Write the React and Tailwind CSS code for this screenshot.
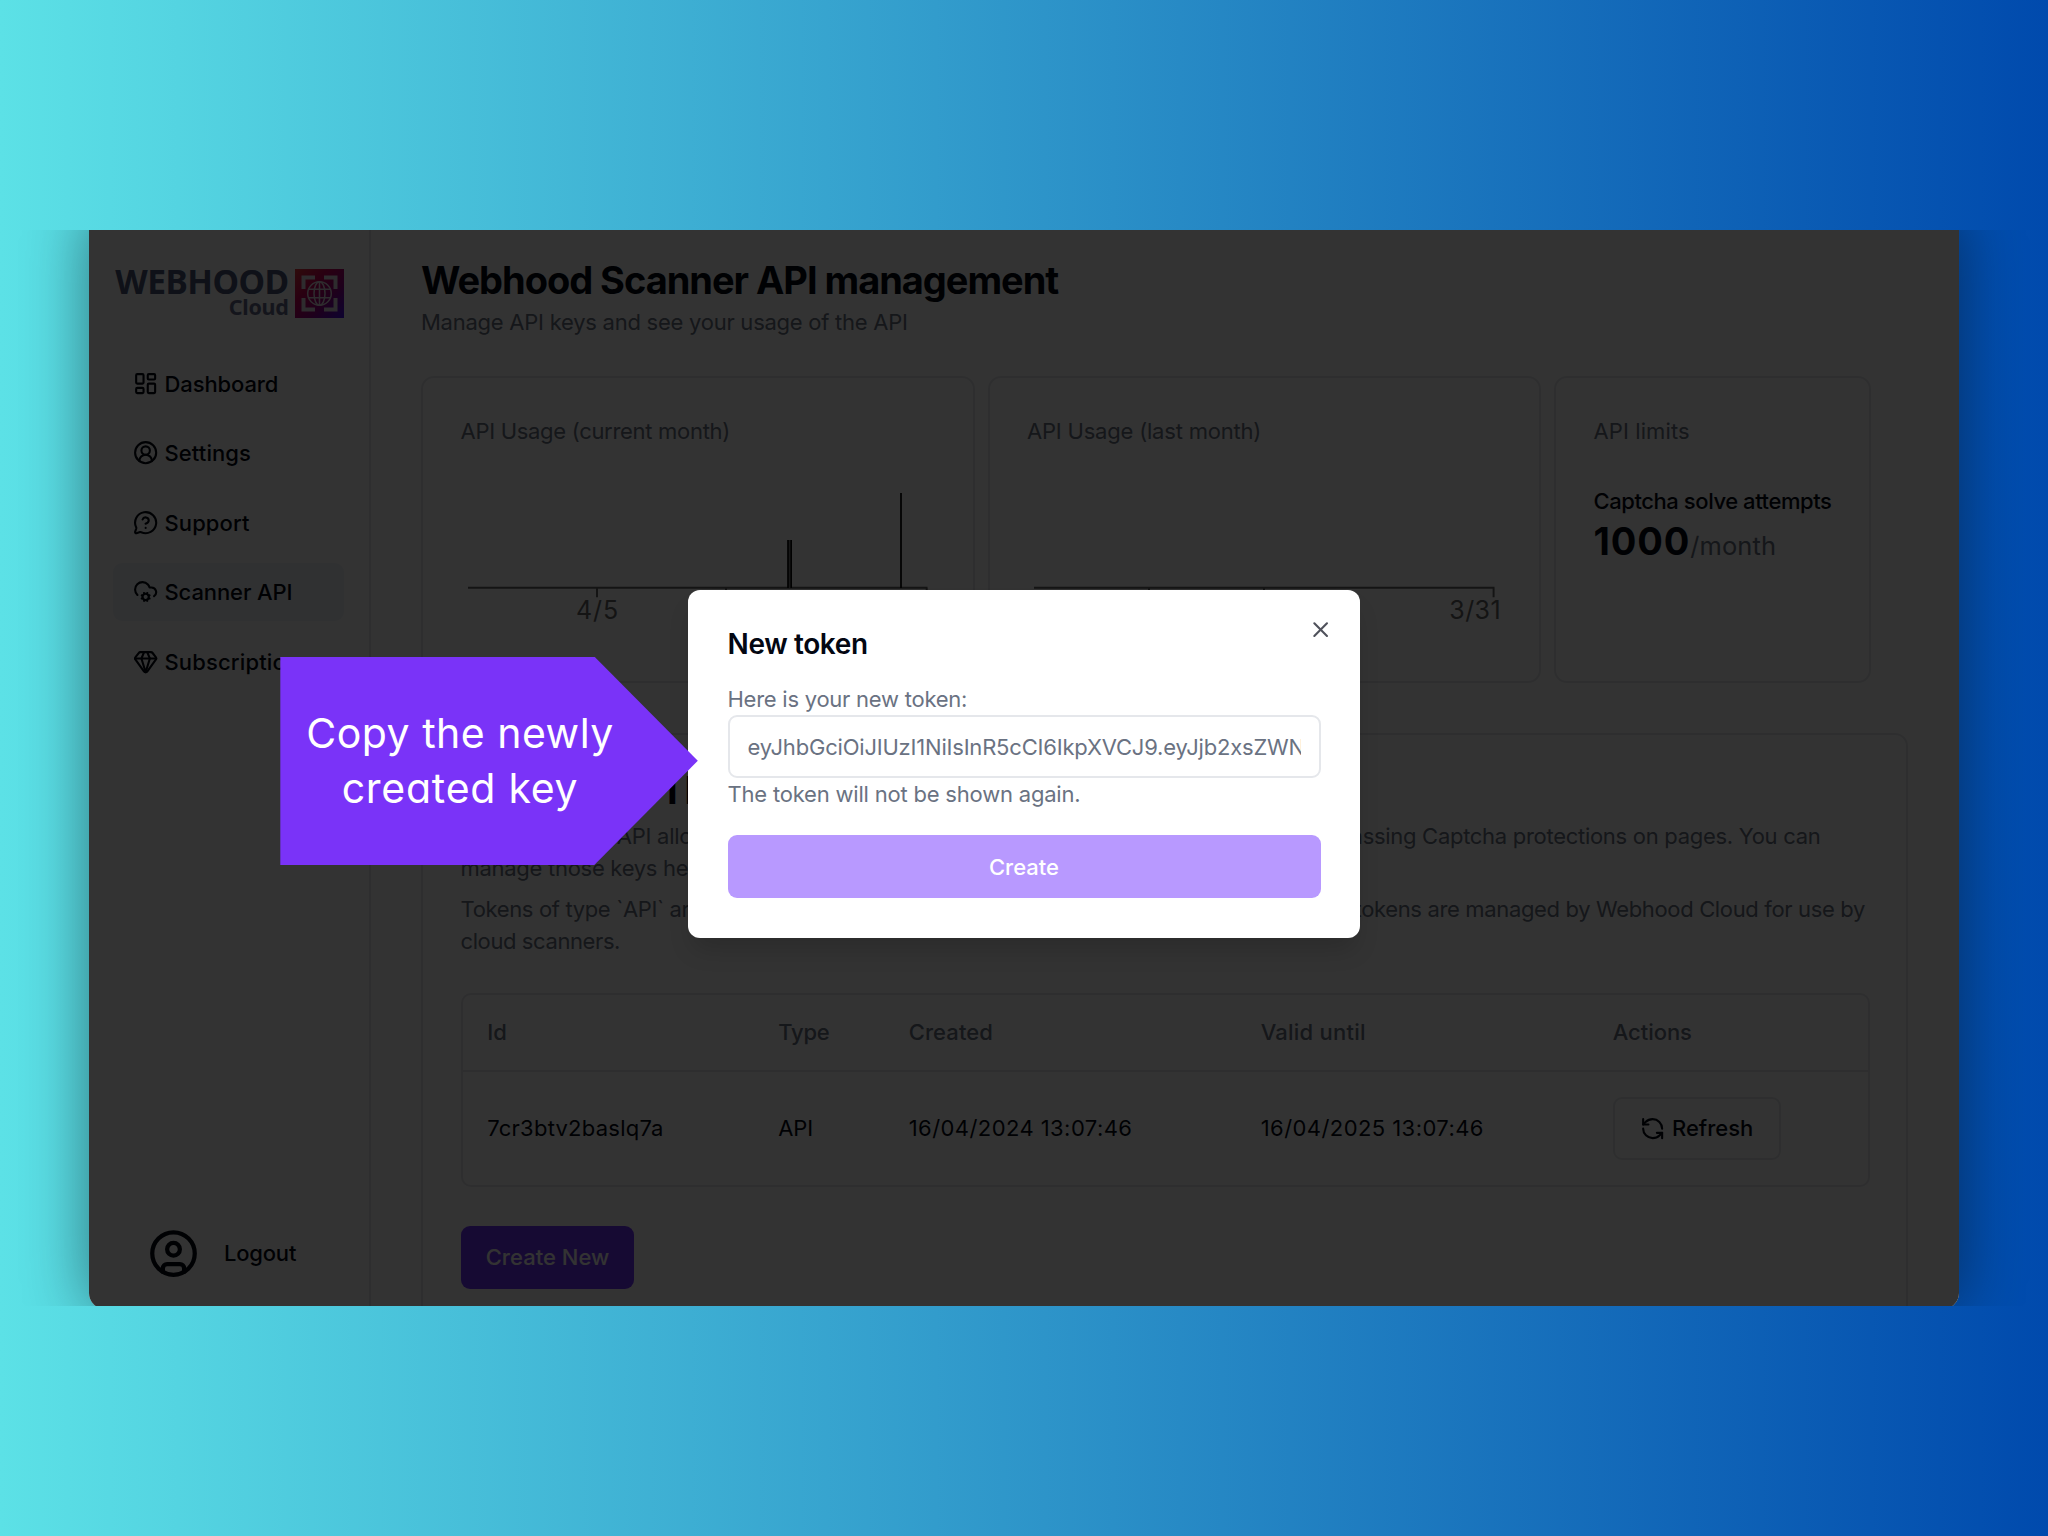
import {
  CircleUser,
  CircleUserRound,
  CloudCog,
  Gem,
  LayoutDashboard,
  MessageCircleQuestionMark,
  RefreshCcw,
  X,
} from "lucide-react";

const navItems = [
  { label: "Dashboard", Icon: LayoutDashboard, tracking: "tracking-[-0.1px]" },
  { label: "Settings", Icon: CircleUserRound, tracking: "tracking-[0.1px]" },
  { label: "Support", Icon: MessageCircleQuestionMark, tracking: "tracking-[0.1px]" },
  { label: "Scanner API", Icon: CloudCog, tracking: "tracking-[-0.1px]", active: true },
  { label: "Subscription", Icon: Gem, tracking: "tracking-[0.15px]" },
];

function Logo() {
  return (
    <div className="flex h-[50px] items-start justify-end gap-[6px] pr-[25.500px] font-['Noto_Sans',sans-serif] font-bold">
      <div className="flex flex-col items-end">
        <span className="h-[26px] text-[33.6px] leading-[25px] tracking-[-0.55px] text-[#4a5878]">WEBHOOD</span>
        <span className="h-[24px] text-[21.5px] leading-[24px] tracking-[-0.3px] text-[#666b8c]">Cloud</span>
      </div>
      <svg viewBox="0 0 49 49" className="size-[49px]" fill="none">
        <defs>
          <linearGradient id="logo" x1="0" y1="0" x2="1" y2="1">
            <stop offset="0" stopColor="#e83c3a" />
            <stop offset="0.35" stopColor="#cc0058" />
            <stop offset="0.65" stopColor="#960088" />
            <stop offset="1" stopColor="#4410f0" />
          </linearGradient>
        </defs>
        <rect width="49" height="49" fill="url(#logo)" />
        <path d="M8.500 20V8.500H20M29 8.500h11.500V20M40.500 29v11.500H29M20 40.500H8.500V29" stroke="#e5dce5" strokeWidth="4" />
        <g stroke="#e5dce5" strokeWidth="1.500">
          <circle cx="24.500" cy="24.500" r="11.800" />
          <ellipse cx="24.500" cy="24.500" rx="5.500" ry="11.800" />
          <path d="M24.500 12.700v23.600M14 20.300h21M14 28.700h21" />
        </g>
      </svg>
    </div>
  );
}

function Sidebar() {
  return (
    <aside className="flex w-[282px] shrink-0 flex-col border-r-2 border-gray-200 pt-[58.500px]">
      <Logo />
      <nav className="mt-[36px] flex flex-col gap-[11.500px] pr-[25px] pl-[24px] text-[22px] font-medium">
        {navItems.map(({ label, Icon, tracking, active }) => (
          <a
            key={label}
            className={
              active
                ? "flex h-[58px] items-center gap-[6.700px] rounded-[9px] bg-slate-100 pl-[19.500px]"
                : "flex h-[58px] items-center gap-[6.700px] rounded-[9px] pl-[19.500px]"
            }
          >
            <Icon className="size-[25.300px]" />
            <span className={`${tracking} pt-px`}>{label}</span>
          </a>
        ))}
      </nav>
      <div className="mt-auto mb-[30px] flex h-[51px] items-center gap-[25.500px] pl-[58.500px] text-[22px] font-medium">
        <CircleUser className="size-[51px]" />
        <span className="tracking-[-0.200px]">Logout</span>
      </div>
    </aside>
  );
}

function CurrentMonthChart() {
  return (
    <svg viewBox="0 0 473 180" className="h-[180px] w-[473px]">
      <path d="M7 140.700h459.500M136 140.700v9.500M265 140.700v9.500M465.700 140.700v9.500" stroke="#666" strokeWidth="2" fill="none" />
      <rect x="326.500" y="93" width="4.200" height="48" fill="#777" />
      <path d="M327 93v48M330.200 93v48" stroke="#000" strokeWidth="1.500" />
      <path d="M440 46v95" stroke="#000" strokeWidth="1.700" />
      <text x="136.500" y="171.500" textAnchor="middle" className="fill-[#666] text-[25px] tracking-[0.900px]">4/5</text>
    </svg>
  );
}

function LastMonthChart() {
  return (
    <svg viewBox="0 0 473 180" className="h-[180px] w-[473px] overflow-visible">
      <path d="M7 140.700h460.500M122 140.700v9.500M237 140.700v9.500M466.600 140.700v9.500" stroke="#666" strokeWidth="2" fill="none" />
      <text x="474" y="171.500" textAnchor="end" className="fill-[#666] text-[25px] tracking-[0.400px]">3/31</text>
    </svg>
  );
}

function UsageCards() {
  const card = "h-[307px] rounded-[13px] border-2 border-gray-200 px-[37.500px] pt-[36.500px]";
  const label = "h-[32px] text-[22px] leading-[32px] text-gray-500";
  return (
    <div className="mt-[38.500px] flex gap-[13px]">
      <section className={`${card} w-[553.500px]`}>
        <h2 className={`${label} tracking-[-0.300px]`}>API Usage (current month)</h2>
        <CurrentMonthChart />
      </section>
      <section className={`${card} w-[553.500px]`}>
        <h2 className={`${label} tracking-[-0.200px]`}>API Usage (last month)</h2>
        <LastMonthChart />
      </section>
      <section className={`${card} w-[316.500px]`}>
        <h2 className={`${label} tracking-[0.100px]`}>API limits</h2>
        <p className="mt-[38.500px] h-[32px] text-[22px] leading-[32px] font-medium tracking-[-0.430px] whitespace-nowrap">Captcha solve attempts</p>
        <p className="flex h-[46px] items-baseline pt-px leading-[46px]">
          <span className="text-[38px] font-bold tracking-[0.850px]">1000</span>
          <span className="text-[25.500px] tracking-[0.100px] text-gray-500">/month</span>
        </p>
      </section>
    </div>
  );
}

function TokensTable() {
  const columns = "grid grid-cols-[291px_130.500px_352px_352px_1fr] items-center pl-[24.700px] text-[22px]";
  return (
    <div className="mt-[36.500px] h-[194px] w-[1409px] rounded-[10px] border-2 border-gray-200">
      <div className={`${columns} h-[76.500px] border-b-2 border-gray-200 pt-px font-medium text-gray-500`}>
        <span>Id</span>
        <span className="tracking-[-0.200px]">Type</span>
        <span className="tracking-[0.100px]">Created</span>
        <span className="tracking-[0.230px]">Valid until</span>
        <span className="tracking-[-0.050px]">Actions</span>
      </div>
      <div className={`${columns} h-[114px]`}>
        <span className="tracking-[0.240px]">7cr3btv2baslq7a</span>
        <span className="tracking-[-0.100px]">API</span>
        <span className="tracking-[0.430px]">16/04/2024 13:07:46</span>
        <span className="tracking-[0.430px]">16/04/2025 13:07:46</span>
        <button className="flex h-[63px] w-[168px] items-center gap-[7px] rounded-[9px] border-2 border-gray-200 pl-[25px] font-medium">
          <RefreshCcw className="size-[25.300px]" />
          Refresh
        </button>
      </div>
    </div>
  );
}

function ScannerKeys() {
  return (
    <section className="mt-[50px] h-[620px] w-[1487px] rounded-[13px] border-2 border-gray-200 px-[37.500px] pt-[31px]">
      <h2 className="h-[48px] text-[38px] leading-[48px] font-bold tracking-[-1.070px]">Scanner API keys</h2>
      <div className="mt-[5.500px] flex w-[1404.500px] flex-col gap-[9px] text-[22px] leading-[32px] text-gray-500">
        <div>
          <p className="flex justify-between pr-[44.500px]">
            <span className="tracking-[-0.270px]">Your Webhood API allows</span>
            <span className="tracking-[-0.290px]">bypassing Captcha protections on pages. You can</span>
          </p>
          <p className="tracking-[-0.280px]">manage those keys here.</p>
        </div>
        <div>
          <p className="flex justify-between">
            <span className="tracking-[-0.350px]">Tokens of type `API` are</span>
            <span className="tracking-[-0.350px]">tokens are managed by Webhood Cloud for use by</span>
          </p>
          <p className="tracking-[-0.400px]">cloud scanners.</p>
        </div>
      </div>
      <TokensTable />
      <button className="mt-[38.500px] flex h-[63px] w-[173px] items-center justify-center rounded-[9px] bg-[#7133ff] pl-px text-[22px] font-medium tracking-[0.020px] text-white">
        Create New
      </button>
    </section>
  );
}

function TokenDialog() {
  return (
    <div className="absolute top-[590px] left-[688px] flex h-[347.500px] w-[672px] flex-col rounded-[12px] bg-white px-[39.500px] pt-[39.500px] text-[22px] text-gray-500 shadow-[0_16px_24px_-5px_rgba(0,0,0,0.160)]">
      <h2 className="h-[28px] text-[28px] leading-[29px] font-semibold tracking-[-0.380px] text-gray-950">New token</h2>
      <X className="absolute top-[27px] right-[27px] size-[25.300px] text-[#4f515b]" />
      <p className="mt-[25.500px] h-[32px] leading-[32px] tracking-[-0.250px]">Here is your new token:</p>
      <div className="flex h-[62.500px] items-center rounded-[9px] border-2 border-gray-200 px-[18px]">
        <span className="w-full overflow-hidden pt-[2px] tracking-[-0.200px] whitespace-nowrap">eyJhbGciOiJIUzI1NiIsInR5cCI6IkpXVCJ9.eyJjb2xsZWN0</span>
      </div>
      <p className="h-[32px] leading-[32px] tracking-[-0.200px]">The token will not be shown again.</p>
      <button className="mt-[25px] h-[63.500px] rounded-[9px] bg-[#b899ff] pt-[2px] font-medium text-white">Create</button>
    </div>
  );
}

function Callout() {
  return (
    <div className="absolute top-[656.500px] left-[280.300px] flex h-[208.500px] w-[417.500px] flex-col justify-center bg-[#7a33f8] pr-[58px] text-center text-[41px] leading-[55px] font-normal text-white [clip-path:polygon(0_0,314px_0,100%_50%,314px_100%,0_100%)] [font-feature-settings:'cv11']">
      <span className="tracking-[0.500px]">Copy the newly</span>
      <span className="tracking-[0.750px]">created key</span>
    </div>
  );
}

export default function App() {
  return (
    <div className="relative h-[1536px] w-[2048px] overflow-hidden bg-linear-to-r/srgb from-[#5ce1e6] to-[#004aad] pt-[230px] font-[Inter,sans-serif] text-gray-950">
      <div className="h-[1075.500px] overflow-hidden px-[89px]">
        <div className="relative -mt-[20px] flex h-[1099px] overflow-hidden rounded-[16px] bg-white shadow-[0_0_64px_rgba(0,0,0,0.450)]">
          <Sidebar />
          <main className="min-w-0 flex-1 overflow-hidden pt-[45.500px] pl-[50px]">
            <h1 className="h-[48px] text-[38px] leading-[48px] font-bold tracking-[-1.030px]">Webhood Scanner API management</h1>
            <p className="mt-[2px] h-[32px] text-[22px] leading-[32px] tracking-[-0.250px] text-gray-500">Manage API keys and see your usage of the API</p>
            <UsageCards />
            <ScannerKeys />
          </main>
          <div className="absolute inset-0 bg-black/80" />
        </div>
      </div>
      <TokenDialog />
      <Callout />
    </div>
  );
}
